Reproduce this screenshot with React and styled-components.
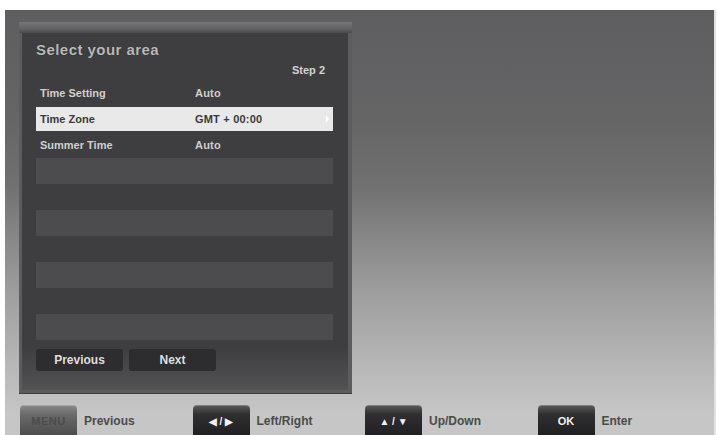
import styled, { createGlobalStyle } from 'styled-components'

const GlobalStyle = createGlobalStyle`
	html, body {
		margin: 0;
		padding: 0;
		background: #ffffff;
		overflow: hidden;
	}
	body {
		font-family: "Liberation Sans", Arial, sans-serif;
	}
`

const rows = [
	{ label: 'Time Setting', value: 'Auto' },
	{ label: 'Time Zone', value: 'GMT + 00:00', selected: true },
	{ label: 'Summer Time', value: 'Auto' },
	{}, {}, {}, {}, {}, {}, {},
]

const legend = [
	{ key: 'MENU', label: 'Previous', muted: true },
	{ key: '\u25C0 / \u25B6', label: 'Left/Right', small: true },
	{ key: '\u25B2 / \u25BC', label: 'Up/Down', small: true },
	{ key: 'OK', label: 'Enter' },
]

function App() {
	return (
		<>
			<GlobalStyle />
			<Screen>
				<Panel>
					<PanelTop />
					<PanelBody>
						<Title>Select your area</Title>
						<Step>Step 2</Step>
						<List>
							{rows.map((row, i) => (
								<Row key={i} $striped={i % 2 === 1} $selected={row.selected}>
									<Label>{row.label}</Label>
									<Value>{row.value}</Value>
									{row.selected && <Caret />}
								</Row>
							))}
						</List>
						<Buttons>
							<NavButton>Previous</NavButton>
							<NavButton>Next</NavButton>
						</Buttons>
					</PanelBody>
				</Panel>

				<Legend>
					{legend.map((item) => (
						<LegendItem key={item.label}>
							<Key $muted={item.muted} $small={item.small}>{item.key}</Key>
							<KeyLabel>{item.label}</KeyLabel>
						</LegendItem>
					))}
				</Legend>
			</Screen>
		</>
	)
}
export default App

const Screen = styled.div`
	margin: 10px 2px 0 5px;
	height: 440px;
	box-sizing: border-box;
	padding: 12px 0 0 14px;
	border-right: 2px solid #e2e2e2;
	background: linear-gradient(
		to bottom,
		#5e5d5f 0%,
		#666566 25%,
		#727172 40%,
		#9a9a9a 62%,
		#b6b6b6 80%,
		#c6c6c6 92%
	);
`

const Panel = styled.div`
	width: 333px;
	height: 371px;
	box-sizing: border-box;
	padding: 0 4px 3px 3px;
	background: #5c5b5d;
	display: flex;
	flex-direction: column;
	box-shadow: 0 1px 0 #3c3c3c;
`

const PanelTop = styled.div`
	height: 11px;
	margin: 0 -4px 0 -3px;
	background: linear-gradient(to bottom, #767577, #636264 60%, #4a494b);
`

const PanelBody = styled.div`
	flex: 1;
	display: flex;
	flex-direction: column;
	padding: 0 15px 0 14px;
	background: linear-gradient(to bottom, #3e3d3f 0%, #3e3d3f 88%, #525153 100%);
`

const Title = styled.div`
	margin-top: 8px;
	font-size: 15px;
	font-weight: bold;
	color: #b9b9b9;
	letter-spacing: 0.45px;
	text-shadow: 0 0 1px rgba(0, 0, 0, 0.6);
`

const Step = styled.div`
	align-self: flex-end;
	margin: 6px 8px 0 0;
	font-size: 11px;
	font-weight: bold;
	color: #d4d4d4;
`

const List = styled.div`
	margin-top: 4px;
	display: flex;
	flex-direction: column;
`

const Row = styled.div`
	position: relative;
	height: 26px;
	box-sizing: border-box;
	display: flex;
	align-items: center;
	padding-left: 4px;
	font-size: 11px;
	font-weight: bold;
	color: ${(p) => (p.$selected ? '#3a3a3a' : '#cfcfcf')};
	background: ${(p) => (p.$selected ? '#e9e9e9' : p.$striped ? '#4c4b4d' : 'transparent')};
	${(p) => p.$selected && 'margin: 1px 0; height: 24px;'}
`

const Label = styled.span`
	width: 155px;
`

const Value = styled.span`
	letter-spacing: 0.2px;
`

const Caret = styled.span`
	position: absolute;
	right: 4px;
	top: 8px;
	width: 0;
	height: 0;
	border-top: 4px solid transparent;
	border-bottom: 4px solid transparent;
	border-left: 3px solid #ffffff;
`

const Buttons = styled.div`
	display: flex;
	gap: 6px;
	margin-top: 9px;
`

const NavButton = styled.div`
	width: 87px;
	height: 22px;
	display: flex;
	align-items: center;
	justify-content: center;
	border-radius: 3px;
	background: #2d2c2e;
	font-size: 12px;
	font-weight: bold;
	color: #dedede;
`

const Legend = styled.div`
	display: flex;
	margin-top: 12px;
	padding-left: 1px;
`

const LegendItem = styled.div`
	width: 172.5px;
	display: flex;
	align-items: center;
	gap: 7px;
`

const Key = styled.div`
	width: 57px;
	height: 32px;
	display: flex;
	align-items: center;
	justify-content: center;
	border-radius: 4px 4px 0 0;
	background: ${(p) =>
		p.$muted
			? 'linear-gradient(to bottom, #8a8a8a, #6a6a6a 30%, #4a4a4a)'
			: 'linear-gradient(to bottom, #5a595b, #2f2e30 30%, #1f1e20)'};
	box-shadow: inset 0 1px 0 rgba(255, 255, 255, 0.25);
	font-size: ${(p) => (p.$small ? '10px' : '11px')};
	font-weight: bold;
	color: ${(p) => (p.$muted ? '#4c4c4c' : '#f2f2f2')};
	letter-spacing: ${(p) => (p.$muted ? '0.5px' : '0')};
	white-space: nowrap;
`

const KeyLabel = styled.span`
	font-size: 12px;
	font-weight: bold;
	color: #4b4b4b;
`
